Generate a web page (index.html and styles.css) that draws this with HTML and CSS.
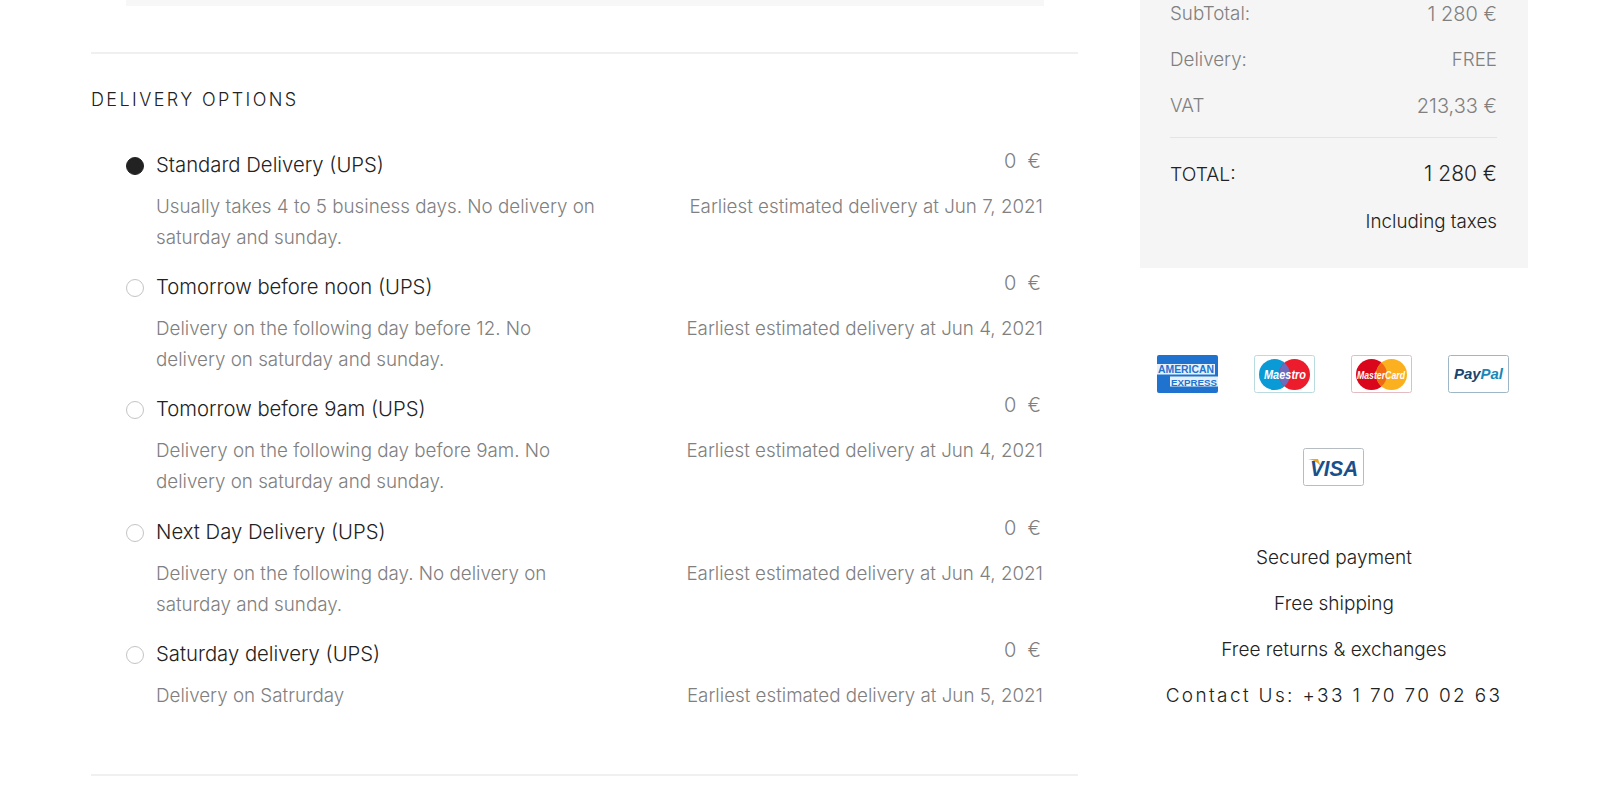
FILE: index.html
```html
<!DOCTYPE html>
<html>
<head>
    <title>Checkout</title>
    <link rel="stylesheet" href="styles.css">
</head>
<body>
<div class="page">
    <div class="main">
        <div class="strip"></div>
        <div class="section">
            <h2 class="title">Delivery options</h2>

            <div class="option">
                <span class="radio checked"></span>
                <div class="option-body">
                    <div class="option-top"><span class="name">Standard Delivery (UPS)</span><span class="price">0&nbsp; €</span></div>
                    <div class="option-bottom"><p class="desc">Usually takes 4 to 5 business days. No delivery on saturday and sunday.</p><p class="eta">Earliest estimated delivery at Jun 7, 2021</p></div>
                </div>
            </div>
            <div class="option">
                <span class="radio"></span>
                <div class="option-body">
                    <div class="option-top"><span class="name">Tomorrow before noon (UPS)</span><span class="price">0&nbsp; €</span></div>
                    <div class="option-bottom"><p class="desc">Delivery on the following day before 12. No delivery on saturday and sunday.</p><p class="eta">Earliest estimated delivery at Jun 4, 2021</p></div>
                </div>
            </div>
            <div class="option">
                <span class="radio"></span>
                <div class="option-body">
                    <div class="option-top"><span class="name">Tomorrow before 9am (UPS)</span><span class="price">0&nbsp; €</span></div>
                    <div class="option-bottom"><p class="desc">Delivery on the following day before 9am. No delivery on saturday and sunday.</p><p class="eta">Earliest estimated delivery at Jun 4, 2021</p></div>
                </div>
            </div>
            <div class="option">
                <span class="radio"></span>
                <div class="option-body">
                    <div class="option-top"><span class="name">Next Day Delivery (UPS)</span><span class="price">0&nbsp; €</span></div>
                    <div class="option-bottom"><p class="desc">Delivery on the following day. No delivery on saturday and sunday.</p><p class="eta">Earliest estimated delivery at Jun 4, 2021</p></div>
                </div>
            </div>
            <div class="option">
                <span class="radio"></span>
                <div class="option-body">
                    <div class="option-top"><span class="name">Saturday delivery (UPS)</span><span class="price">0&nbsp; €</span></div>
                    <div class="option-bottom"><p class="desc">Delivery on Satrurday</p><p class="eta">Earliest estimated delivery at Jun 5, 2021</p></div>
                </div>
            </div>
        </div>
    </div>

    <div class="side">
        <div class="summary">
            <div class="line"><span>SubTotal:</span><span class="amount">1 280 €</span></div>
            <div class="line"><span>Delivery:</span><span>FREE</span></div>
            <div class="line"><span>VAT</span><span class="amount">213,33 €</span></div>
            <div class="line total"><span>TOTAL:</span><span class="amount">1 280 €</span></div>
            <div class="taxes">Including taxes</div>
        </div>

        <div class="cards">
            <svg class="card" viewBox="0 0 61 38">
                <rect width="61" height="38" rx="2" fill="#1f72cd"/>
                <rect y="9" width="58" height="10.500" fill="#e8f1fb"/>
                <rect x="13" y="21.500" width="48" height="10" fill="#e8f1fb"/>
                <text x="1" y="18" class="amex" textLength="56" lengthAdjust="spacingAndGlyphs">AMERICAN</text>
                <text x="14" y="30.500" class="amex small" textLength="46" lengthAdjust="spacingAndGlyphs">EXPRESS</text>
            </svg>
            <svg class="card" viewBox="0 0 61 38">
                <rect x="0.5" y="0.5" width="60" height="37" rx="2" fill="#fff" stroke="#b9dbe0"/>
                <circle cx="20.500" cy="19.500" r="15.500" fill="#0a9bd6"/>
                <circle cx="40.500" cy="19.500" r="15.500" fill="#ec1c2d"/>
                <path d="M30.500 7.660a15.500 15.500 0 0 1 0 23.680a15.500 15.500 0 0 1 0-23.680z" fill="#6c6bbd"/>
                <text x="10" y="24" class="logo-light" textLength="42" lengthAdjust="spacingAndGlyphs">Maestro</text>
            </svg>
            <svg class="card" viewBox="0 0 61 38">
                <rect x="0.5" y="0.5" width="60" height="37" rx="2" fill="#fff" stroke="#e3bcc2"/>
                <circle cx="20.500" cy="19.500" r="15.500" fill="#d9061c"/>
                <circle cx="40.500" cy="19.500" r="15.500" fill="#fbb01f"/>
                <path d="M30.500 7.660a15.500 15.500 0 0 1 0 23.680a15.500 15.500 0 0 1 0-23.680z" fill="#f06a13"/>
                <text x="6" y="23.500" class="logo-light small" textLength="48" lengthAdjust="spacingAndGlyphs">MasterCard</text>
            </svg>
            <svg class="card" viewBox="0 0 61 38">
                <rect x="0.5" y="0.5" width="60" height="37" rx="2" fill="#fff" stroke="#9fb6c6"/>
                <text x="6" y="24" class="paypal" textLength="49" lengthAdjust="spacingAndGlyphs"><tspan fill="#17456f">Pay</tspan><tspan fill="#1a87b8">Pal</tspan></text>
            </svg>
            <svg class="card" viewBox="0 0 61 38">
                <rect x="0.5" y="0.5" width="60" height="37" rx="2" fill="#fff" stroke="#b5bdc2"/>
                <path d="M5 11h10l3 8c-2-4-7-7-13-8z" fill="#eea720"/>
                <text x="7" y="28" class="visa" textLength="48" lengthAdjust="spacingAndGlyphs">VISA</text>
            </svg>
        </div>

        <ul class="perks">
            <li>Secured payment</li>
            <li>Free shipping</li>
            <li>Free returns &amp; exchanges</li>
            <li class="contact">Contact Us: +33 1 70 70 02 63</li>
        </ul>
    </div>
</div>
</body>
</html>
```

FILE: styles.css
```css
html, body
{
    margin: 0;
    height: 791px;
    overflow: hidden;
    background: #ffffff;
}
body
{
    font-family: "Inter", "Liberation Sans", sans-serif;
    font-weight: 300;
    font-size: 18.8px;
    color: #222222;
}
p
{
    margin: 0;
}
.page
{
    display: flex;
    padding-left: 91px;
}

/* left column */
.main
{
    width: 987px;
}
.strip
{
    height: 6px;
    margin: 0 34px 0 35px;
    background: #f7f7f7;
}
.section
{
    margin-top: 46px;
    height: 720px;
    border-top: 2px solid #f0f0f0;
    border-bottom: 2px solid #f0f0f0;
}
.title
{
    margin: 32px 0 34px;
    font-size: 18px;
    font-weight: 300;
    line-height: 28px;
    letter-spacing: 2.4px;
    text-transform: uppercase;
}
.option
{
    display: flex;
    height: 122.2px;
    padding: 0 35px;
}
.radio
{
    flex: none;
    box-sizing: border-box;
    width: 18px;
    height: 18px;
    margin: 9px 12px 0 0;
    border: 1px solid #c4c4c4;
    border-radius: 50%;
}
.radio.checked
{
    background: #222222;
    border-color: #222222;
}
.option-body
{
    flex: 1;
}
.option-top
{
    display: flex;
    justify-content: space-between;
    height: 36px;
    line-height: 36px;
}
.name
{
    font-size: 20.3px;
    line-height: 34px;
}
.price
{
    margin-top: -5px;
    padding-right: 2px;
    font-size: 20px;
    color: #808080;
}
.option-bottom
{
    display: flex;
    justify-content: space-between;
    margin-top: 7px;
    line-height: 31px;
    color: #808080;
}
.desc
{
    width: 442px;
}

/* right column */
.side
{
    width: 388px;
    margin-left: 62px;
}
.summary
{
    box-sizing: border-box;
    height: 268px;
    padding: 0 31px 0 30px;
    background: #f5f5f5;
}
.line
{
    display: flex;
    justify-content: space-between;
    height: 46px;
    line-height: 28px;
    color: #808080;
}
.amount
{
    font-size: 20px;
}
.line.total
{
    height: auto;
    margin-top: -1px;
    padding-top: 22px;
    border-top: 1px solid #e4e4e4;
    font-size: 19.3px;
    color: #222222;
}
.total .amount
{
    font-size: 21px;
}
.taxes
{
    margin-top: 20px;
    line-height: 28px;
    text-align: right;
}
.cards
{
    display: flex;
    flex-wrap: wrap;
    justify-content: center;
    width: 388px;
    margin: 87px 0 0 -1px;
    row-gap: 55px;
}
.card
{
    width: 61px;
    height: 38px;
    margin: 0 18px;
}
.amex
{
    font: 700 10.5px "Liberation Sans", sans-serif;
    fill: #1f72cd;
}
.amex.small
{
    font-size: 9.5px;
}
.logo-light
{
    font: italic 700 12px "Liberation Sans", sans-serif;
    fill: #ffffff;
}
.logo-light.small
{
    font-size: 10px;
}
.paypal
{
    font: italic 700 15px "Liberation Sans", sans-serif;
}
.visa
{
    font: italic 700 22px "Liberation Sans", sans-serif;
    fill: #17508c;
}
.perks
{
    list-style: none;
    margin: 58px 0 0;
    padding: 0;
    font-size: 19px;
    text-align: center;
}
.perks li
{
    height: 46px;
    line-height: 28px;
}
.perks .contact
{
    letter-spacing: 2.35px;
}
```
